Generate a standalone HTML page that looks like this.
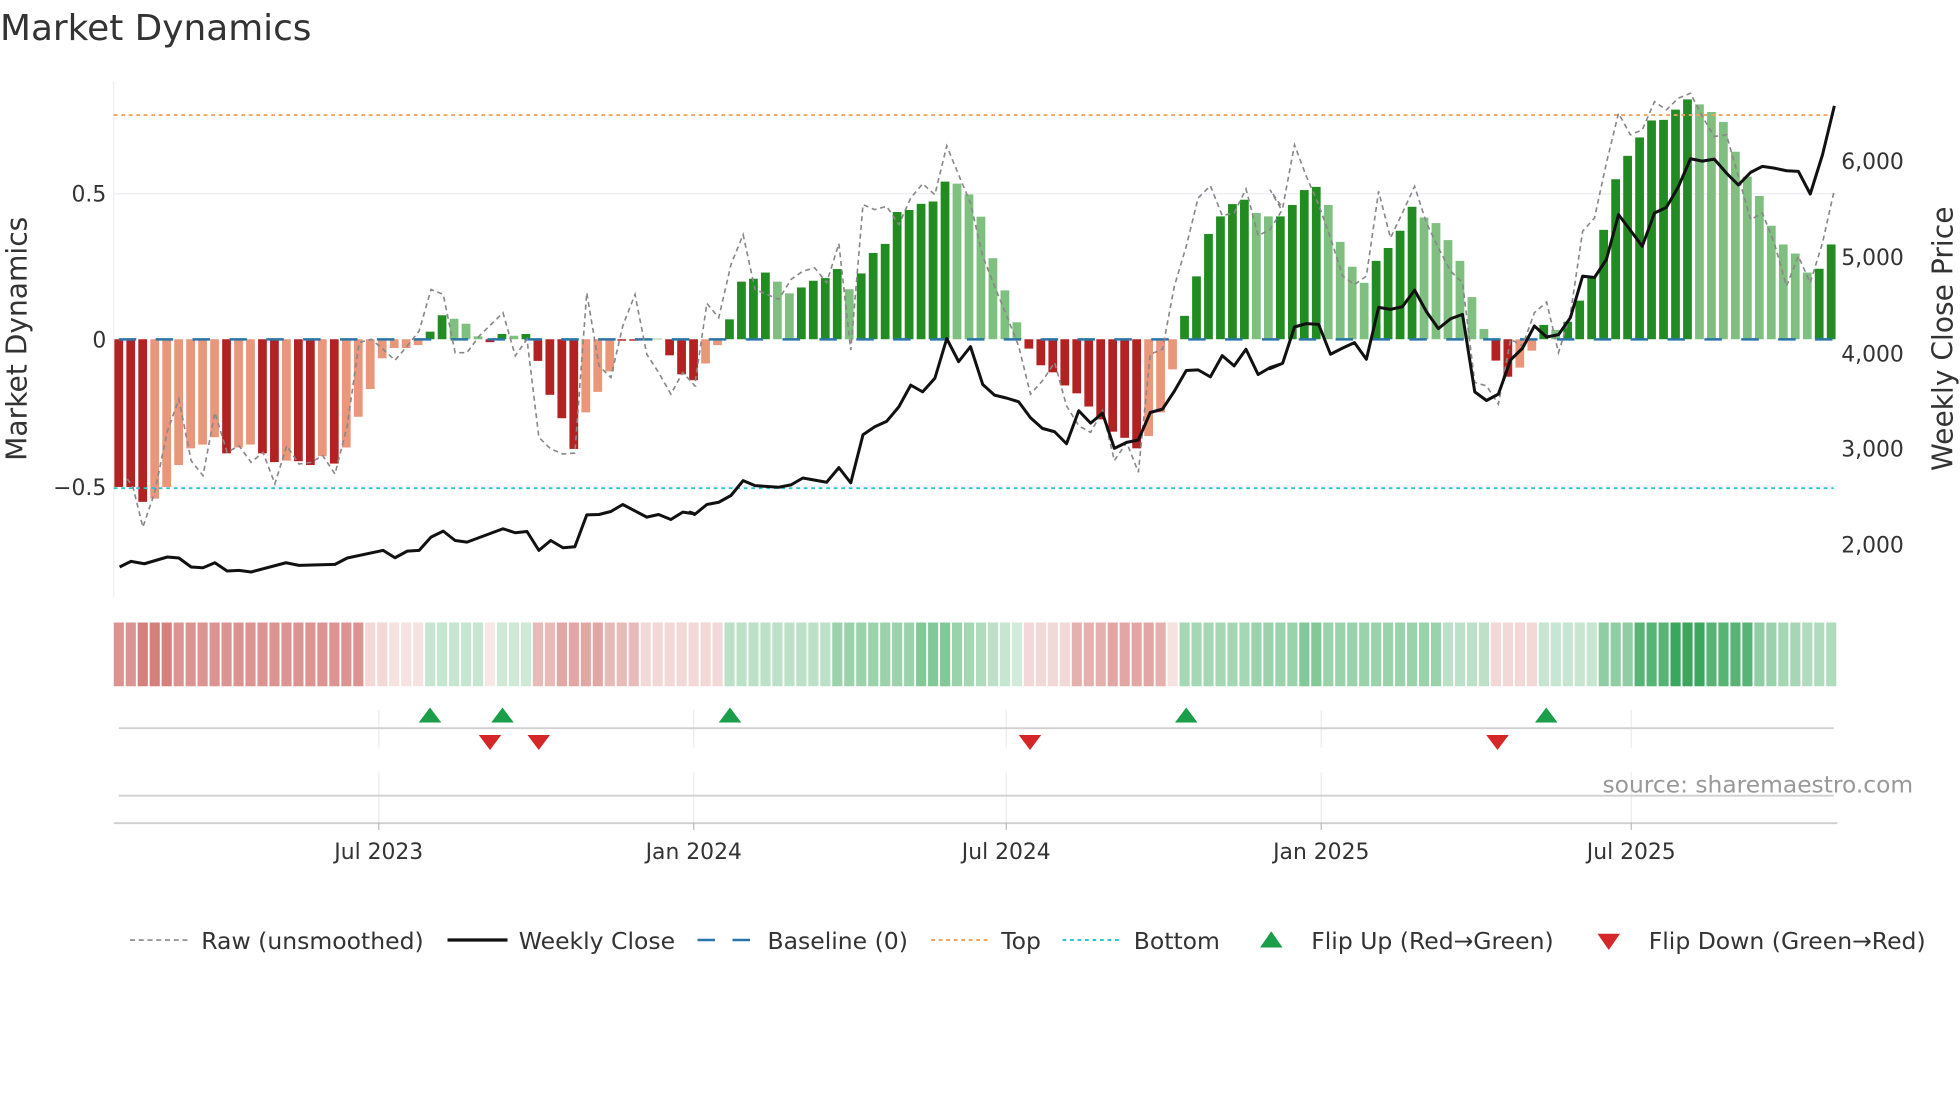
<!DOCTYPE html>
<html><head><meta charset="utf-8">
<style>
html,body{margin:0;padding:0;background:#fff;}
svg{display:block;}
text{font-family:"DejaVu Sans","Liberation Sans",sans-serif;fill:#333;}
</style></head>
<body>
<svg id="s" width="1960" height="1102" viewBox="0 0 1568 881.6" xmlns="http://www.w3.org/2000/svg">
<rect x="0" y="0" width="1568" height="881.6" fill="#fff"/>
<text x="0" y="32" font-size="28.7">Market Dynamics</text>
<line x1="91" y1="65" x2="91" y2="478" stroke="#eee" stroke-width="1"/>
<line x1="91" y1="155" x2="1470" y2="155" stroke="#eef0f6" stroke-width="1.2"/>
<line x1="91" y1="389" x2="1470" y2="389" stroke="#eef0f6" stroke-width="1.2"/>
<g id="bars"></g>
<g id="strip"></g>
<line x1="91" y1="92" x2="1467" y2="92" stroke="#eea560" stroke-width="1.5" stroke-dasharray="3 3"/>
<line x1="91" y1="390.5" x2="1467" y2="390.5" stroke="#2ec4d6" stroke-width="1.5" stroke-dasharray="3 3"/>
<line x1="95" y1="271.5" x2="1467" y2="271.5" stroke="#2b76a8" stroke-width="2" stroke-dasharray="14 15.5"/>
<polyline id="raw" fill="none" stroke="#888" stroke-width="1.3" stroke-dasharray="4 3"/>
<polyline id="close" fill="none" stroke="#111" stroke-width="2.4" stroke-linejoin="round"/>
<g font-size="17.5">
<text x="85" y="161" text-anchor="end">0.5</text>
<text x="85" y="278" text-anchor="end">0</text>
<text x="85" y="396" text-anchor="end">−0.5</text>
<text x="1473" y="135">6,000</text>
<text x="1473" y="212">5,000</text>
<text x="1473" y="289">4,000</text>
<text x="1473" y="365">3,000</text>
<text x="1473" y="442">2,000</text>
</g>
<text transform="translate(21,271) rotate(-90)" font-size="22.5" text-anchor="middle">Market Dynamics</text>
<text transform="translate(1562,271) rotate(-90)" font-size="22.5" text-anchor="middle">Weekly Close Price</text>
<g stroke="#ececec" stroke-width="1">
<line x1="303" y1="568" x2="303" y2="598"/><line x1="555" y1="568" x2="555" y2="598"/><line x1="805" y1="568" x2="805" y2="598"/><line x1="1057" y1="568" x2="1057" y2="598"/><line x1="1305" y1="568" x2="1305" y2="598"/>
<line x1="303" y1="618" x2="303" y2="658"/><line x1="555" y1="618" x2="555" y2="658"/><line x1="805" y1="618" x2="805" y2="658"/><line x1="1057" y1="618" x2="1057" y2="658"/><line x1="1305" y1="618" x2="1305" y2="658"/>
</g>
<line x1="95" y1="582.5" x2="1467" y2="582.5" stroke="#d0d0d0" stroke-width="1.5"/>
<line x1="95" y1="636.5" x2="1467" y2="636.5" stroke="#d0d0d0" stroke-width="1.5"/>
<line x1="91" y1="658.5" x2="1470" y2="658.5" stroke="#cfcfcf" stroke-width="1.5"/>
<g stroke="#bbb" stroke-width="1"><line x1="303" y1="658" x2="303" y2="664"/><line x1="555" y1="658" x2="555" y2="664"/><line x1="805" y1="658" x2="805" y2="664"/><line x1="1057" y1="658" x2="1057" y2="664"/><line x1="1305" y1="658" x2="1305" y2="664"/></g>
<g id="flips"></g>
<text x="1282" y="634" font-size="18.7" style="fill:#999">source: sharemaestro.com</text>
<g font-size="17.5" text-anchor="middle">
<text x="303" y="687">Jul 2023</text><text x="555" y="687">Jan 2024</text><text x="805" y="687">Jul 2024</text><text x="1057" y="687">Jan 2025</text><text x="1305" y="687">Jul 2025</text>
</g>
<g font-size="18.8">
<line x1="104" y1="752" x2="150" y2="752" stroke="#888" stroke-width="1.3" stroke-dasharray="4 3"/>
<text x="161" y="759">Raw (unsmoothed)</text>
<line x1="358" y1="752" x2="406" y2="752" stroke="#111" stroke-width="2.6"/>
<text x="415" y="759">Weekly Close</text>
<line x1="558" y1="752" x2="604" y2="752" stroke="#2b76a8" stroke-width="2" stroke-dasharray="14 14"/>
<text x="614" y="759">Baseline (0)</text>
<line x1="745" y1="752" x2="791" y2="752" stroke="#eea560" stroke-width="1.6" stroke-dasharray="3 3"/>
<text x="801" y="759">Top</text>
<line x1="850" y1="752" x2="896" y2="752" stroke="#2ec4d6" stroke-width="1.6" stroke-dasharray="3 3"/>
<text x="907" y="759">Bottom</text>
<polygon points="1008,758 1026,758 1017,745" fill="#1a9e4a"/>
<text x="1049" y="759">Flip Up (Red→Green)</text>
<polygon points="1278,747 1296,747 1287,760" fill="#d62728"/>
<text x="1319" y="759">Flip Down (Green→Red)</text>
</g>
</svg>
<script>
(function(){
var NS="http://www.w3.org/2000/svg";
function el(t,a,p){var e=document.createElementNS(NS,t);for(var k in a)e.setAttribute(k,a[k]);p.appendChild(e);return e;}
var V=[-0.505,-0.505,-0.556,-0.545,-0.505,-0.43,-0.373,-0.36,-0.335,-0.39,-0.37,-0.36,-0.39,-0.42,-0.415,-0.417,-0.43,-0.40,-0.425,-0.37,-0.265,-0.17,-0.065,-0.03,-0.03,-0.02,0.026,0.082,0.07,0.053,0.01,-0.01,0.018,0.012,0.018,-0.074,-0.19,-0.27,-0.375,-0.25,-0.18,-0.11,-0.005,-0.005,-0.003,0.002,-0.055,-0.12,-0.14,-0.083,-0.02,
0.068,0.197,0.207,0.228,0.197,0.157,0.177,0.2,0.209,0.24,0.171,0.225,0.295,0.326,0.435,0.442,0.463,0.471,0.539,0.532,0.495,0.419,0.277,0.167,0.058,
-0.032,-0.089,-0.113,-0.158,-0.185,-0.23,-0.274,-0.316,-0.337,-0.373,-0.331,-0.25,-0.103,
0.08,0.215,0.36,0.42,0.462,0.477,0.432,0.42,0.42,0.459,0.51,0.521,0.459,0.333,0.248,0.193,0.268,0.312,0.371,0.453,0.416,0.397,0.339,0.268,0.144,0.035,
-0.073,-0.128,-0.097,-0.039,
0.049,0.032,0.06,0.132,0.215,0.374,0.547,0.627,0.69,0.748,0.75,0.785,0.82,0.803,0.777,0.743,0.641,0.556,0.49,0.388,0.324,0.293,0.228,0.241,0.324];
var dark=[1,1,1,0,0,0,0,0,0,1,0,0,1,1,0,1,1,0,1,0,0,0,0,0,0,0,1,1,0,0,0,1,1,0,1,1,1,1,1,0,0,0,1,1,0,0,1,1,1,0,0,
1,1,1,1,0,0,1,1,1,1,0,1,1,1,1,1,1,1,1,0,0,0,0,0,0,
1,1,1,1,1,1,1,1,1,1,0,0,0,
1,1,1,1,1,1,0,0,1,1,1,1,0,0,0,0,1,1,1,1,0,0,0,0,0,0,
1,1,0,0,
1,0,1,1,1,1,1,1,1,1,1,1,1,0,0,0,0,0,0,0,0,0,0,1,1];
var bars=document.getElementById('bars');
for(var i=0;i<V.length;i++){
 var v=V[i],cx=95+i*9.58,y0=271.4,y=y0-v*234;
 var c=v>=0?(dark[i]?'#228b22':'#7fbf7f'):(dark[i]?'#b22222':'#e9967a');
 el('rect',{x:(cx-3.5).toFixed(2),y:Math.min(y,y0).toFixed(2),width:7,height:Math.max(Math.abs(y-y0),0.6).toFixed(2),fill:c},bars);
}
var S=[];
function put(a,b,val){for(var k=a;k<=b;k++)S[k]=val;}
put(1,21,-0.55);put(3,5,-0.65);put(22,23,-0.2);put(24,26,-0.15);
put(27,31,0.25);put(32,32,-0.12);put(33,35,0.22);
put(36,44,-0.35);put(38,41,-0.45);put(45,51,-0.2);
put(52,60,0.3);put(61,67,0.45);put(68,70,0.55);
S[71]=0.45;S[72]=0.4;S[73]=0.35;S[74]=0.3;S[75]=0.25;S[76]=0.2;
put(77,80,-0.2);put(81,88,-0.4);put(84,87,-0.45);put(89,89,-0.15);
put(90,95,0.4);put(96,111,0.45);put(100,101,0.55);put(112,115,0.3);
put(116,119,-0.2);
put(120,124,0.25);put(125,127,0.5);put(128,137,0.75);put(131,133,0.88);
S[138]=0.5;S[139]=0.45;S[140]=0.4;S[141]=0.4;S[142]=0.35;S[143]=0.35;S[144]=0.35;
var st=document.getElementById('strip');
for(var k=1;k<=144;k++){
 var t=Math.abs(S[k]),r,g,b;
 if(S[k]<0){r=255-(255-190)*t;g=255-(255-60)*t;b=255-(255-55)*t;}
 else{r=255-(255-30)*t;g=255-(255-155)*t;b=255-(255-70)*t;}
 el('rect',{x:(91+(k-1)*9.58).toFixed(2),y:498,width:8.1,height:51,fill:'rgb('+Math.round(r)+','+Math.round(g)+','+Math.round(b)+')'},st);
}
function conv(off,arr){var o=[];for(var j=0;j<arr.length;j+=2)o.push((off+arr[j]/3.267).toFixed(1)+','+(64+arr[j+1]/3.76).toFixed(1));return o;}
var c1=[25,1465,55,1448,90,1455,150,1435,180,1438,212,1465,243,1467,274,1452,306,1477,337,1475,369,1480,460,1452,494,1460,588,1457,620,1438,714,1415,745,1437,777,1417,808,1415,839,1375,871,1357,902,1385,933,1390,1027,1350,1059,1362,1090,1358,1121,1415,1152,1385,1184,1407,1215,1404,1246,1308,1278,1307,1309,1298,1340,1277,1403,1315,1434,1307,1466,1322,1497,1300,1529,1305];
var c2=[0,1300,12,1307,44,1277,75,1270,107,1250,139,1205,170,1220,232,1225,264,1218,295,1197,357,1210,389,1166,420,1212,452,1067,483,1043,514,1027,546,983,577,918,608,938,640,897,671,778,702,847,733,802,765,916,796,948,828,957,859,968,890,1016,921,1048,953,1058,984,1094,1016,995,1047,1032,1078,1002,1109,1108,1141,1090,1172,1083,1203,1000,1235,990,1266,936,1297,874,1328,872,1360,893,1391,829,1422,860,1453,810,1485,886,1516,865,1547,853];
var c3=[0,868,33,852,64,743,95,733,127,735,158,825,190,806,221,790,252,840,284,684,315,690,346,682,378,632,409,697,440,748,472,718,503,705,535,938,566,964,597,945,629,842,660,807,691,740,723,773,754,766,785,715,817,590,848,594,879,540,911,405,942,452,973,500,1005,400,1036,383,1067,322,1099,237,1130,244,1161,238,1193,280,1224,316,1256,278,1287,260,1318,265,1350,273,1381,275,1412,343,1444,225,1475,78];
document.getElementById('close').setAttribute('points',conv(88,c1).concat(conv(552,c2),conv(1016,c3)).join(' '));
var r1=[45,1200,60,1225,86,1345,117,1240,149,1060,180,960,212,1145,243,1190,274,1000,306,1120,337,1100,369,1150,400,1120,431,1215,462,1100,494,1155,525,1150,556,1130,588,1185,620,1040,651,790,683,780,714,810,745,843,777,800,808,755,839,630,871,645,902,820,933,820,965,770,1027,700,1059,830,1090,780,1121,1075,1152,1110,1184,1125,1215,1122,1246,640,1278,860,1309,895,1340,740,1372,645,1403,825,1434,880,1466,945,1497,880,1529,920];
var r2=[12,920,44,672,75,715,107,555,139,465,170,630,201,645,232,660,264,600,295,575,326,565,357,610,389,492,420,812,452,375,483,390,514,380,546,435,577,355,608,312,640,345,671,198,702,285,733,370,765,530,796,620,828,710,859,800,890,945,921,905,953,850,984,980,1016,1040,1047,1060,1078,995,1109,1145,1141,1090,1172,1180,1203,825,1235,810,1266,620,1297,500,1328,355,1360,318,1391,408,1422,400,1453,328,1485,468,1516,450,1547,392];
var r3=[0,330,33,385,64,195,95,290,127,375,158,475,190,590,221,615,252,590,284,335,315,475,346,400,378,320,409,430,440,505,472,575,503,610,535,910,566,920,597,975,629,780,660,800,691,700,723,668,754,820,785,705,817,455,848,415,879,250,911,100,942,165,973,150,1005,65,1036,90,1067,55,1099,40,1130,110,1161,170,1193,165,1224,290,1256,420,1287,400,1318,490,1350,620,1381,530,1412,610,1444,490,1475,330];
document.getElementById('raw').setAttribute('points',conv(88,r1).concat(conv(552,r2),conv(1016,r3)).join(' '));
var f=document.getElementById('flips');
[344,402,584,949,1237].forEach(function(x){el('polygon',{points:(x-9)+',578 '+(x+9)+',578 '+x+',566',fill:'#1a9e4a'},f);});
[392,431,824,1198].forEach(function(x){el('polygon',{points:(x-9)+',588 '+(x+9)+',588 '+x+',600',fill:'#d62728'},f);});
})();
</script>
</body></html>
